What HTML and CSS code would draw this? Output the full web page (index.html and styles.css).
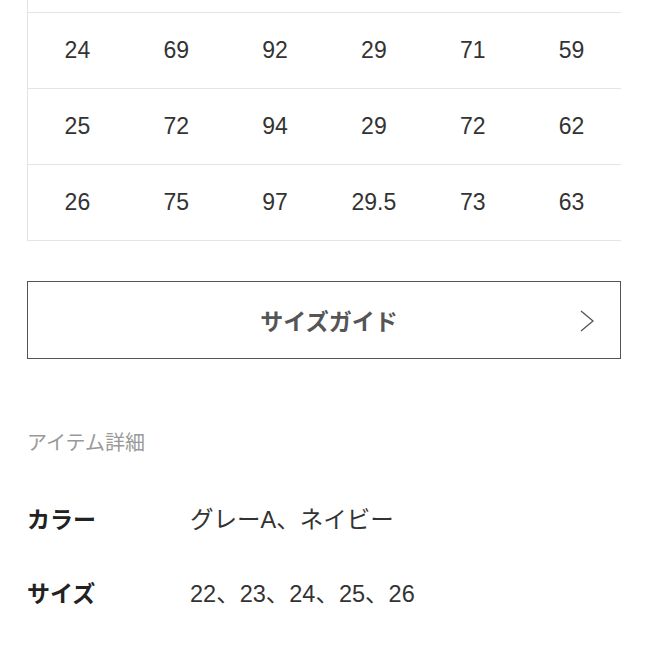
FILE: index.html
```html
<!DOCTYPE html>
<html lang="ja">
<head>
<meta charset="utf-8">
<link rel="stylesheet" href="styles.css">
</head>
<body>
<div class="wrap">
  <div class="table">
    <div class="row row-partial"></div>
    <div class="row">
      <span>24</span><span>69</span><span>92</span><span>29</span><span>71</span><span>59</span>
    </div>
    <div class="row">
      <span>25</span><span>72</span><span>94</span><span>29</span><span>72</span><span>62</span>
    </div>
    <div class="row">
      <span>26</span><span>75</span><span>97</span><span>29.5</span><span>73</span><span>63</span>
    </div>
  </div>

  <div class="guide">
    <span class="guide-label">サイズガイド</span>
    <svg class="chev" width="14" height="22" viewBox="0 0 14 22"><polyline points="1,1 13,11 1,21" fill="none" stroke="#555" stroke-width="1.3"/></svg>
  </div>

  <div class="details-title">アイテム詳細</div>
  <div class="detail">
    <span class="d-label">カラー</span>
    <span class="d-value">グレーA、ネイビー</span>
  </div>
  <div class="detail">
    <span class="d-label">サイズ</span>
    <span class="d-value">22、23、24、25、26</span>
  </div>
</div>
</body>
</html>
```
FILE: styles.css
```css
html, body {
  margin: 0;
  padding: 0;
  background: #fff;
}
body {
  font-family: "Liberation Sans", "Noto Sans CJK JP", sans-serif;
  color: #333;
}
.wrap {
  padding: 0 27px;
}
.table {
  border-left: 1px solid #e4e4e4;
}
.row {
  display: grid;
  grid-template-columns: repeat(6, 1fr);
  height: 75px;
  align-items: center;
  border-bottom: 1px solid #e4e4e4;
  font-size: 23px;
  color: #333;
}
.row span {
  text-align: center;
}
.row-partial {
  height: 12px;
}
.guide {
  margin-top: 40px;
  height: 76px;
  border: 1px solid #555;
  display: flex;
  align-items: center;
  justify-content: center;
  padding-left: 10px;
  position: relative;
}
.guide-label {
  font-size: 23px;
  font-weight: bold;
  color: #555;
}
.chev {
  position: absolute;
  right: 26px;
  top: 28px;
}
.details-title {
  margin-top: 70px;
  font-size: 20px;
  line-height: 28px;
  color: #999;
}
.detail {
  display: flex;
  align-items: center;
  height: 30px;
  margin-top: 46px;
  font-size: 23px;
}
.detail + .detail {
  margin-top: 44px;
}
.d-label {
  width: 163px;
  font-weight: bold;
  color: #222;
}
.d-value {
  color: #333;
  font-size: 23.5px;
}
```
